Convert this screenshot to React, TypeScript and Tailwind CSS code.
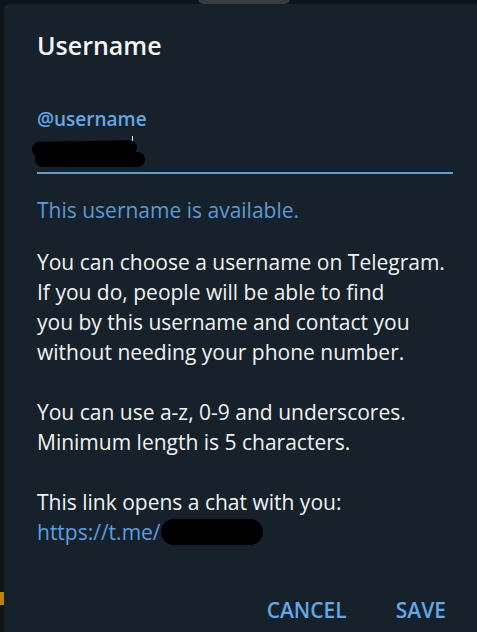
export default function App() {
  return (
    <div className="relative h-[632px] w-[477px] overflow-hidden bg-[#0f151c] pl-[4px] pt-[4px]" style={{ fontFamily: '"Open Sans", sans-serif' }}>
      {/* bits of the window behind */}
      <div className="absolute left-[198px] top-[-8px] h-[12px] w-[92px] rounded-full bg-[#3a3d40]" />
      <div className="absolute left-0 top-[592px] h-[13px] w-[4px] bg-[#b8860b]" />

      <div className="flex h-full flex-col rounded-tl-[5px] bg-[#17212b] pl-[33px] pr-[24px]">
        <h1 className="mt-[24px] text-[25px] font-semibold leading-[34px] text-[#f5f5f5]">Username</h1>

        <div className="mt-[44px]">
          <div className="text-[19px] font-semibold leading-[26px] text-[#64a8e4]">@username</div>
          <div className="relative h-[40px]">
            <div className="absolute left-[95px] top-[4px] h-[5px] w-px bg-white" />
            <div className="absolute left-[-5px] top-[9px] h-[15px] w-[105px] rotate-[-1deg] rounded-full bg-black" />
            <div className="absolute left-[-2px] top-[20px] h-[15px] w-[110px] rounded-full bg-black" />
          </div>
          <div className="h-[2px] bg-[#5b9fd9]" />
        </div>

        <p className="mt-[21px] text-[21px] leading-[30px] text-[#5a9bd6]">This username is available.</p>

        <div className="mt-[22px] text-[21px] leading-[30px] text-[#f2f2f2]">
          <p>You can choose a username on Telegram.</p>
          <p>If you do, people will be able to find</p>
          <p>you by this username and contact you</p>
          <p>without needing your phone number.</p>
          <p className="mt-[30px]">You can use a-z, 0-9 and underscores.</p>
          <p>Minimum length is 5 characters.</p>
          <p className="mt-[30px]">This link opens a chat with you:</p>
          <p className="flex items-center">
            <span className="text-[#5a9fe0]">https://t.me/</span>
            <span className="inline-block h-[26px] w-[102px] rounded-full bg-black" />
          </p>
        </div>

        <div className="mt-auto mb-[7px] flex justify-end gap-[49px] pr-[7px]">
          <button className="text-[21px] font-semibold uppercase leading-[30px] text-[#64a8e4]">Cancel</button>
          <button className="text-[21px] font-semibold uppercase leading-[30px] text-[#64a8e4]">Save</button>
        </div>
      </div>
    </div>
  );
}
